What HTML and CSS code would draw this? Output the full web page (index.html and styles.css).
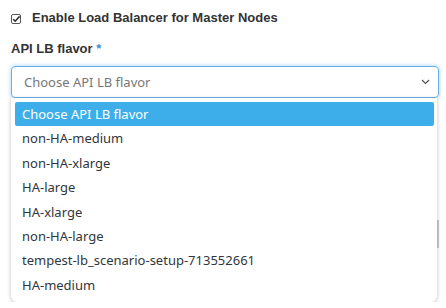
FILE: index.html
```html
<!DOCTYPE html>
<html lang="en">
<head>
    <meta charset="UTF-8">
    <meta name="viewport" content="width=device-width, initial-scale=1.0">
    <title>API LB flavor</title>
    <link rel="stylesheet" href="styles.css">
</head>
<body>
    <div class="lb_form">
        <label class="check_row">
            <span class="check_box">
                <svg width="10" height="10" viewBox="0 0 10 10">
                    <rect x="0.5" y="0.5" width="9" height="9" rx="1.5" fill="#fff" stroke="#555"/>
                    <path d="M2.2 5.2 L4.2 7.2 L8.6 2.4" fill="none" stroke="#333" stroke-width="1.6"/>
                </svg>
            </span>
            Enable Load Balancer for Master Nodes
        </label>
        <div class="field_label">API LB flavor <span class="req">*</span></div>
        <div class="select_box">
            <span class="placeholder">Choose API LB flavor</span>
            <svg class="chevron" width="9" height="6" viewBox="0 0 9 6">
                <path d="M1 1 L4.5 4.5 L8 1" fill="none" stroke="#555" stroke-width="1.2"/>
            </svg>
        </div>
        <div class="drop_row">
            <div class="drop_list">
                <div class="opt active">Choose API LB flavor</div>
                <div class="opt">non-HA-medium</div>
                <div class="opt">non-HA-xlarge</div>
                <div class="opt">HA-large</div>
                <div class="opt">HA-xlarge</div>
                <div class="opt">non-HA-large</div>
                <div class="opt">tempest-lb_scenario-setup-713552661</div>
                <div class="opt">HA-medium</div>
            </div>
            <div class="behind_bar"></div>
        </div>
    </div>
</body>
</html>
```
FILE: styles.css
```css
* {
    margin:0; padding:0; box-sizing:border-box;
}
body {background:#fff; font-family:"Liberation Sans", Arial, sans-serif; color:#333;}
.lb_form {padding:9px 7px 0 11px; display:flex; flex-direction:column;}
.check_row {
    display:flex; align-items:center; gap:11px; font-weight:bold; font-size:13px;
    height:16px;
}
.check_box {display:flex; margin-top:3px;}
.field_label {font-weight:bold; font-size:13px; margin-top:16px; height:16px;}
.field_label .req {color:#3d8fd6;}
.select_box {
    margin-top:9px; height:32px; border:1px solid #66afe9; border-radius:4px;
    box-shadow:0 0 4px rgba(102,175,233,0.6);
    display:flex; align-items:center; justify-content:space-between;
    padding:0 8px 0 12px;
    font-family:"Noto Sans", "Open Sans", sans-serif; font-size:13px;
}
.select_box .placeholder {color:#777;}
.drop_row {display:flex; align-items:flex-start;}
.drop_list {
    width:426px; height:204px; flex:none;
    background:#fff; border-radius:0 0 6px 6px;
    box-shadow:0 1px 4px rgba(0,0,0,0.25);
    padding:4px 3px 4px 4px;
    font-family:"Noto Sans", "Open Sans", sans-serif; font-size:13px; color:#31363b;
    position:relative; z-index:1;
}
.behind_bar {width:2px; height:28px; margin-top:122px; background:#ccc;}
.opt {height:24.4px; line-height:24.4px; padding-left:7px; white-space:nowrap;}
.opt.active {background:#3daee9; color:#fff; border-radius:2px;}
```
